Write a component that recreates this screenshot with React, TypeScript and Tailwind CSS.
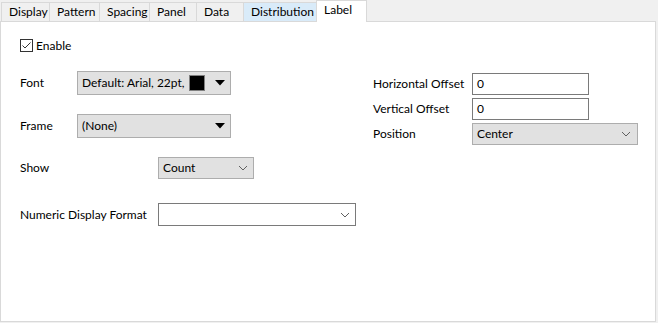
import React from 'react';

const tabs = ['Display', 'Pattern', 'Spacing', 'Panel', 'Data', 'Distribution'];
const tabWidths = ['w-[49px]', 'w-[51px]', 'w-[51px]', 'w-[48px]', 'w-[48px]', 'w-[74px]'];

function Triangle() {
  return (
    <svg width="10" height="6" viewBox="0 0 10 6">
      <path d="M0 0 L10 0 L5 5.5 Z" fill="#000" />
    </svg>
  );
}

function Chevron() {
  return (
    <svg width="10" height="6" viewBox="0 0 10 6">
      <path d="M1 1 L5 5 L9 1" fill="none" stroke="#606060" strokeWidth="1" />
    </svg>
  );
}

export default function App() {
  return (
    <div
      className="w-[658px] h-[323px] bg-[#f0f0f0] flex flex-col text-[12px] text-black overflow-hidden whitespace-nowrap"
      style={{ fontFamily: '"Segoe UI", Lato, sans-serif' }}
    >
      {/* tab strip */}
      <div className="flex items-end h-[21px] pl-[1px] shrink-0">
        {tabs.map((t, i) => (
          <div
            key={t}
            className={`${tabWidths[i]} h-[19px] border border-b-0 border-[#d9d9d9] -ml-[1px] first:ml-0 flex items-center pl-[7px] leading-none ${
              t === 'Distribution' ? 'bg-[#d9ebf9] border-[#c8dff2]' : 'bg-[#f0f0f0]'
            }`}
          >
            {t}
          </div>
        ))}
        <div className="w-[51px] h-[22px] bg-white border border-b-0 border-[#d9d9d9] -ml-[1px] flex items-start pt-[3px] pl-[7px] leading-none relative top-[1px]">
          Label
        </div>
      </div>

      {/* panel */}
      <div className="flex-1 mr-[2px] mb-[1px] bg-white border border-[#d9d9d9] flex">
        {/* left column */}
        <div className="w-[371px] pl-[19px] flex flex-col">
          <div className="flex items-center gap-[3px] mt-[17px] h-[13px]">
            <div className="w-[13px] h-[13px] border border-[#333] bg-white flex items-center justify-center">
              <svg width="11" height="11" viewBox="0 0 11 11">
                <path d="M1.5 5.5 L4 8 L9.5 2.5" fill="none" stroke="#333" strokeWidth="1" />
              </svg>
            </div>
            <span>Enable</span>
          </div>

          <div className="flex items-center mt-[19px] h-[24px]">
            <span className="w-[57px]">Font</span>
            <div className="w-[154px] h-[24px] bg-[#e1e1e1] border border-[#adadad] flex items-center pl-[4px] pr-[5px]">
              <span className="flex-1">Default: Arial, 22pt,</span>
              <div className="w-[16px] h-[16px] bg-black border border-[#808080] mr-[10px]" />
              <Triangle />
            </div>
          </div>

          <div className="flex items-center mt-[19px] h-[24px]">
            <span className="w-[57px]">Frame</span>
            <div className="w-[154px] h-[24px] bg-[#e1e1e1] border border-[#adadad] flex items-center pl-[4px] pr-[5px]">
              <span className="flex-1">(None)</span>
              <Triangle />
            </div>
          </div>

          <div className="flex items-center mt-[19px] h-[22px]">
            <span className="w-[138px]">Show</span>
            <div className="w-[96px] h-[22px] bg-[#e1e1e1] border border-[#adadad] flex items-center pl-[4px] pr-[5px]">
              <span className="flex-1">Count</span>
              <Chevron />
            </div>
          </div>

          <div className="flex items-center mt-[24px] h-[23px]">
            <span className="w-[138px]">Numeric Display Format</span>
            <div className="w-[198px] h-[23px] bg-white border border-[#7a7a7a] flex items-center justify-end pr-[5px]">
              <Chevron />
            </div>
          </div>
        </div>

        {/* right column */}
        <div className="flex-1 pl-[1px] flex flex-col">
          <div className="flex items-center mt-[51px] h-[22px]">
            <span className="w-[99px]">Horizontal Offset</span>
            <div className="w-[117px] h-[22px] bg-white border border-[#7a7a7a] flex items-center pl-[4px]">0</div>
          </div>
          <div className="flex items-center mt-[3px] h-[22px]">
            <span className="w-[99px]">Vertical Offset</span>
            <div className="w-[117px] h-[22px] bg-white border border-[#7a7a7a] flex items-center pl-[4px]">0</div>
          </div>
          <div className="flex items-center mt-[3px] h-[22px]">
            <span className="w-[99px]">Position</span>
            <div className="w-[166px] h-[22px] bg-[#e1e1e1] border border-[#adadad] flex items-center pl-[4px] pr-[6px]">
              <span className="flex-1">Center</span>
              <Chevron />
            </div>
          </div>
        </div>
      </div>
    </div>
  );
}
